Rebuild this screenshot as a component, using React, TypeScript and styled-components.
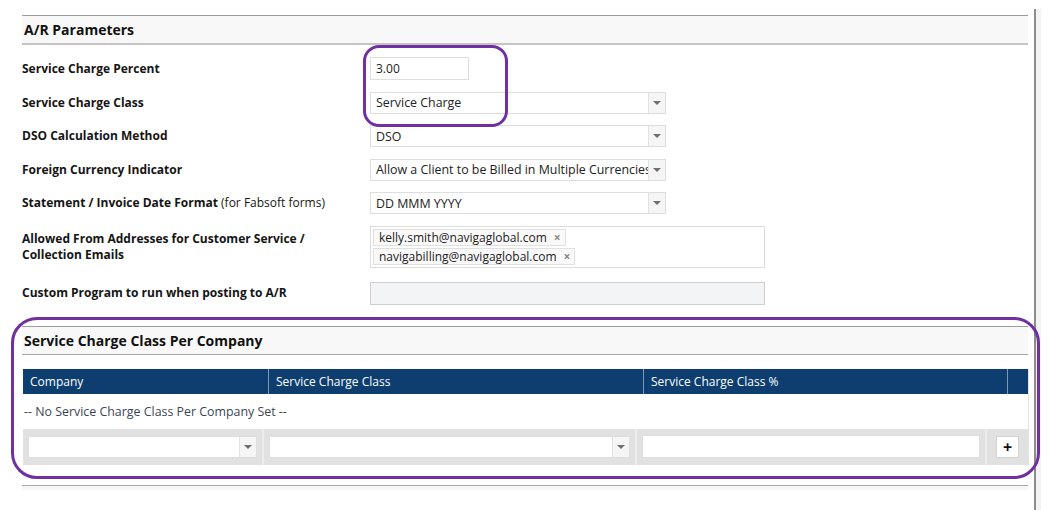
import styled, { createGlobalStyle } from "styled-components";

const GlobalStyle = createGlobalStyle`
  body {
    margin: 0;
    background: #ffffff;
    font-family: "Open Sans", "Noto Sans", sans-serif;
    color: #1b1b1b;
  }
`;

const Page = styled.div`
  position: relative;
  width: 1050px;
  height: 510px;
  display: flex;
  padding: 9px 0 0 22px;
  box-sizing: border-box;
  overflow: hidden;
`;

const Main = styled.div`
  width: 1006px;
  padding-top: 6px;
  display: flex;
  flex-direction: column;
`;

const Rail = styled.div`
  margin-left: 6px;
  width: 2px;
  background: #8c8c8c;
`;

const RailTrack = styled.div`
  width: 5px;
  background: #f3f3f3;
`;

const SectionHeader = styled.div<{ $thick?: boolean }>`
  height: 27px;
  display: flex;
  align-items: center;
  padding-left: 2px;
  background: #f8f8f8;
  border-top: 1px solid #9c9c9c;
  border-bottom: ${(p) => (p.$thick ? "2px solid #c4c4c4" : "1px solid #a6a6a6")};
  font-size: 14px;
  font-weight: 700;
  color: #111;
`;

const Form = styled.div`
  display: grid;
  grid-template-columns: 348px 1fr;
  row-gap: 11.6px;
  align-items: center;
  padding-top: 12px;
`;

const Label = styled.div<{ $push?: number }>`
  font-size: 12px;
  font-weight: 700;
  line-height: 16px;
  color: #151515;
  margin-top: ${(p) => p.$push ?? 0}px;

  span {
    font-weight: 400;
  }
`;

const TextInput = styled.div<{ $w: number; $disabled?: boolean; $push?: number }>`
  width: ${(p) => p.$w}px;
  height: 23px;
  box-sizing: border-box;
  margin-top: ${(p) => p.$push ?? 0}px;
  border: 1px solid ${(p) => (p.$disabled ? "#cfcfcf" : "#dedede")};
  background: ${(p) => (p.$disabled ? "#f3f4f6" : "#fff")};
  padding-left: 5px;
  display: flex;
  align-items: center;
  font-size: 12px;
  color: #222;
`;

const Select = styled.div<{ $w: number }>`
  width: ${(p) => p.$w}px;
  height: 22px;
  box-sizing: border-box;
  border: 1px solid #dedede;
  background: #fff;
  display: flex;
  align-items: stretch;
  font-size: 12.4px;
  color: #222;
`;

const SelectValue = styled.div`
  flex: 1;
  min-width: 0;
  padding-left: 5px;
  display: flex;
  align-items: center;
  white-space: nowrap;
  overflow: hidden;
`;

const Arrow = styled.div`
  width: 16px;
  flex-shrink: 0;
  border-left: 1px solid #e2e2e2;
  background: #f5f5f5;
  display: flex;
  align-items: center;
  justify-content: center;

  &::after {
    content: "";
    border-left: 4px solid transparent;
    border-right: 4px solid transparent;
    border-top: 4px solid #707070;
  }
`;

const TagBox = styled.div`
  width: 395px;
  height: 42px;
  box-sizing: border-box;
  border: 1px solid #dcdcdc;
  padding: 2px;
  display: flex;
  flex-direction: column;
  align-items: flex-start;
  gap: 2px;
`;

const Tag = styled.div`
  height: 17px;
  box-sizing: border-box;
  border: 1px solid #e0e0e0;
  background: #f9f9f9;
  padding: 0 4px 0 5px;
  display: flex;
  align-items: center;
  gap: 7px;
  font-size: 12px;
  color: #222;

  b {
    font-weight: 700;
    font-size: 12px;
    color: #8a8a8a;
  }
`;

const Spacer = styled.div<{ $h: number }>`
  height: ${(p) => p.$h}px;
  flex-shrink: 0;
`;

const Table = styled.div`
  margin-left: 1px;
  width: 1005px;
  border-right: 1px solid #e4e4e4;
`;

const HeadRow = styled.div`
  display: grid;
  grid-template-columns: 246px 375px 364px 1fr;
  height: 25px;
  background: #0d3e6f;
`;

const HeadCell = styled.div`
  display: flex;
  align-items: center;
  padding-left: 7px;
  color: #fff;
  font-size: 12px;
  border-right: 1px solid #7f97b2;

  &:last-child {
    border-right: none;
  }
`;

const EmptyRow = styled.div`
  height: 35px;
  display: flex;
  align-items: center;
  padding-left: 1px;
  font-size: 12.4px;
  color: #3b4654;
  background: #fff;
`;

const EntryRow = styled.div`
  display: grid;
  grid-template-columns: 241px 373px 350px 1fr;
  height: 36px;
  background: #e1e1e1;
`;

const EntryCell = styled.div<{ $center?: boolean }>`
  display: flex;
  align-items: center;
  justify-content: ${(p) => (p.$center ? "center" : "flex-start")};
  padding: 0 5px;
  border-right: 2px solid #ececec;

  &:last-child {
    border-right: none;
  }
`;

const PlusButton = styled.div`
  width: 23px;
  height: 22px;
  box-sizing: border-box;
  border: 1px solid #d4d4d4;
  background: #fff;
  display: flex;
  align-items: center;
  justify-content: center;
  font-size: 16px;
  font-weight: 700;
  color: #111;
  line-height: 1;
`;

const BottomRule = styled.div`
  height: 4px;
  border-top: 1px solid #a8a8a8;
  background: #f6f6f6;
`;

const Highlight = styled.div<{ $x: number; $y: number; $w: number; $h: number; $r: number }>`
  position: absolute;
  left: ${(p) => p.$x}px;
  top: ${(p) => p.$y}px;
  width: ${(p) => p.$w}px;
  height: ${(p) => p.$h}px;
  border: 3.5px solid #7030a0;
  border-radius: ${(p) => p.$r}px;
  box-sizing: border-box;
  pointer-events: none;
`;

const FormSelect = ({ value, w = 296 }: { value: string; w?: number }) => (
  <Select $w={w}>
    <SelectValue>{value}</SelectValue>
    <Arrow />
  </Select>
);

const App = () => {
  return (
    <>
      <GlobalStyle />
      <Page>
        <Main>
          <SectionHeader $thick>A/R Parameters</SectionHeader>
          <Form>
            <Label>Service Charge Percent</Label>
            <TextInput $w={99}>3.00</TextInput>

            <Label>Service Charge Class</Label>
            <FormSelect value="Service Charge" />

            <Label>DSO Calculation Method</Label>
            <FormSelect value="DSO" />

            <Label>Foreign Currency Indicator</Label>
            <FormSelect value="Allow a Client to be Billed in Multiple Currencies" />

            <Label>
              Statement / Invoice Date Format <span>(for Fabsoft forms)</span>
            </Label>
            <FormSelect value="DD MMM YYYY" />

            <Label>
              Allowed From Addresses for Customer Service /<br />
              Collection Emails
            </Label>
            <TagBox>
              <Tag>
                kelly.smith@navigaglobal.com <b>×</b>
              </Tag>
              <Tag>
                navigabilling@navigaglobal.com <b>×</b>
              </Tag>
            </TagBox>

            <Label $push={2}>Custom Program to run when posting to A/R</Label>
            <TextInput $w={395} $disabled $push={2} />
          </Form>

          <Spacer $h={21} />
          <SectionHeader>Service Charge Class Per Company</SectionHeader>
          <Spacer $h={14} />

          <Table>
            <HeadRow>
              <HeadCell>Company</HeadCell>
              <HeadCell>Service Charge Class</HeadCell>
              <HeadCell>Service Charge Class %</HeadCell>
              <HeadCell />
            </HeadRow>
            <EmptyRow>-- No Service Charge Class Per Company Set --</EmptyRow>
            <EntryRow>
              <EntryCell>
                <FormSelect value="" w={230} />
              </EntryCell>
              <EntryCell>
                <FormSelect value="" w={362} />
              </EntryCell>
              <EntryCell>
                <TextInput $w={339} />
              </EntryCell>
              <EntryCell $center>
                <PlusButton>+</PlusButton>
              </EntryCell>
            </EntryRow>
          </Table>

          <Spacer $h={20} />
          <BottomRule />
        </Main>
        <Rail />
        <RailTrack />

        <Highlight $x={363} $y={45} $w={145} $h={82} $r={16} />
        <Highlight $x={11} $y={317} $w={1029} $h={162} $r={26} />
      </Page>
    </>
  );
};

export default App;
